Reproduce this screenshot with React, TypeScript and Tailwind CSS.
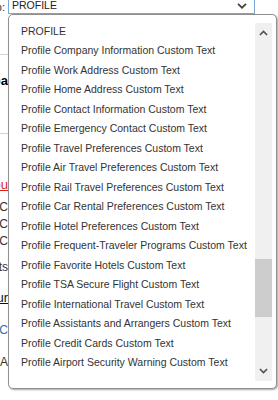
import React from 'react'

const items = [
  'PROFILE',
  'Profile Company Information Custom Text',
  'Profile Work Address Custom Text',
  'Profile Home Address Custom Text',
  'Profile Contact Information Custom Text',
  'Profile Emergency Contact Custom Text',
  'Profile Travel Preferences Custom Text',
  'Profile Air Travel Preferences Custom Text',
  'Profile Rail Travel Preferences Custom Text',
  'Profile Car Rental Preferences Custom Text',
  'Profile Hotel Preferences Custom Text',
  'Profile Frequent-Traveler Programs Custom Text',
  'Profile Favorite Hotels Custom Text',
  'Profile TSA Secure Flight Custom Text',
  'Profile International Travel Custom Text',
  'Profile Assistants and Arrangers Custom Text',
  'Profile Credit Cards Custom Text',
  'Profile Airport Security Warning Custom Text',
]

function Chevron({ up, className }: { up?: boolean; className?: string }) {
  return (
    <svg viewBox="0 0 10 6" className={className} fill="none" stroke="currentColor" strokeWidth={1.8}>
      {up ? <path d="M1 5.2 L5 1.3 L9 5.2" /> : <path d="M1 0.8 L5 4.7 L9 0.8" />}
    </svg>
  )
}

// Clipped page content peeking out at the left edge
function Peek({ children, className }: { children: React.ReactNode; className?: string }) {
  return (
    <div className={`flex w-[8px] justify-end overflow-hidden whitespace-nowrap ${className ?? ''}`}>
      {children}
    </div>
  )
}

export default function App() {
  return (
    <div className="relative h-[400px] w-[278px] overflow-hidden bg-white font-['Liberation_Sans',Arial,sans-serif] text-[10.5px] text-[#333]">
      {/* page underneath */}
      <div className="flex h-[14px] items-center">
        <Peek className="text-[11px] text-[#333]">Group:&nbsp;</Peek>
        <div className="flex h-[22px] w-[247px] items-center justify-between self-end border border-[#7aa7d8] bg-white pl-[3px] pr-[7px] pb-[3px]">
          <span className="pt-[8px] text-[10.5px] text-[#222]">PROFILE</span>
          <Chevron className="mt-[8px] h-[6px] w-[10px] text-[#444]" />
        </div>
      </div>
      <div className="flex flex-col">
        <div className="mt-[40px] h-px w-[8px] bg-[#d4d4d4]" />
        <Peek className="mt-[16px] text-[13px] font-bold text-black">Company Databa</Peek>
        <div className="mt-[42px] h-px w-[8px] bg-[#d4d4d4]" />
        <Peek className="mt-[41px] text-[13px] text-[#d9261c] underline">Custom Text Grou</Peek>
        <Peek className="mt-[4px] text-[12px]">Add C</Peek>
        <Peek className="mt-[-1px] text-[12px]">Add C</Peek>
        <Peek className="mt-[-1px] text-[12px]">Add C</Peek>
        <Peek className="mt-[8px] text-[12px]">Lists</Peek>
        <Peek className="mt-[12px] text-[13px] text-[#111] underline">Tour</Peek>
        <Peek className="mt-[13px] text-[12px] text-[#2a6ebb]">C</Peek>
        <Peek className="mt-[14px] text-[12px]">A</Peek>
      </div>

      {/* open dropdown */}
      <div className="absolute left-[8px] top-[14px] flex h-[375px] w-[269px] rounded-[5px] border border-[#8f8f8f] bg-white shadow-[1px_1px_2px_rgba(0,0,0,0.35)]">
        <ul className="min-w-0 flex-1 overflow-hidden pt-[7px]">
          {items.map((t) => (
            <li key={t} className="flex h-[19.5px] items-center whitespace-nowrap pl-[12px] text-[10.5px] text-[#333]">
              {t}
            </li>
          ))}
        </ul>
        <div className="mb-[7px] mr-[4px] mt-[8px] flex w-[17px] shrink-0 flex-col bg-[#f0f0f0]">
          <div className="flex h-[17px] items-center justify-center pt-[3px]">
            <Chevron up className="h-[6px] w-[9px] text-[#505050]" />
          </div>
          <div className="h-[219px]" />
          <div className="h-[58px] bg-[#cdcdcd]" />
          <div className="flex-1" />
          <div className="flex h-[17px] items-center justify-center pb-[3px]">
            <Chevron className="h-[6px] w-[9px] text-[#505050]" />
          </div>
        </div>
      </div>
    </div>
  )
}
